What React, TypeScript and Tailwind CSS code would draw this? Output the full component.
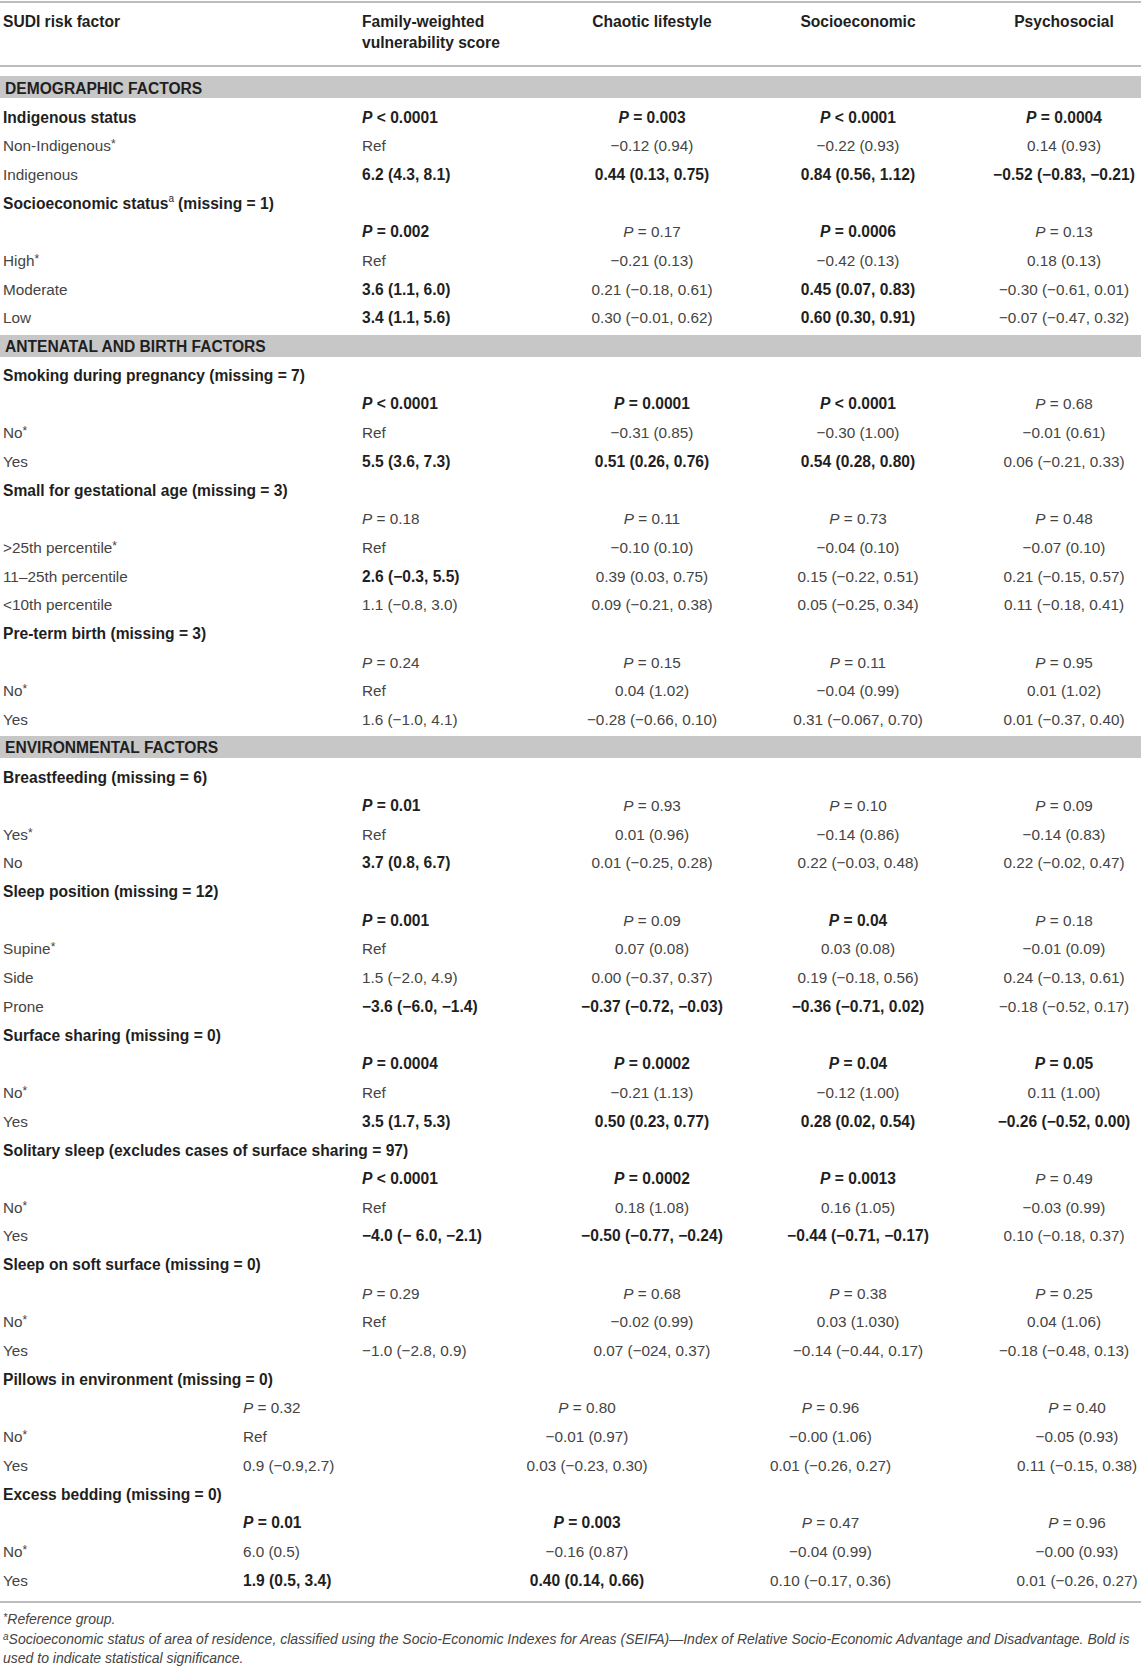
import React from "react";

type Row =
  | { kind: "section"; label: string }
  | { kind: "group"; label: string; sup?: string; cells?: string[]; alt?: boolean }
  | { kind: "data"; label: string; cells: string[]; alt?: boolean };

// "!" at the start of a cell = bold (statistically significant)
const rows: Row[] = [
  { kind: "section", label: "DEMOGRAPHIC FACTORS" },
  { kind: "group", label: "Indigenous status", cells: ["!P < 0.0001", "!P = 0.003", "!P < 0.0001", "!P = 0.0004"] },
  { kind: "data", label: "Non-Indigenous*", cells: ["Ref", "−0.12 (0.94)", "−0.22 (0.93)", "0.14 (0.93)"] },
  { kind: "data", label: "Indigenous", cells: ["!6.2 (4.3, 8.1)", "!0.44 (0.13, 0.75)", "!0.84 (0.56, 1.12)", "!−0.52 (−0.83, −0.21)"] },
  { kind: "group", label: "Socioeconomic status", sup: "a" },
  { kind: "data", label: "", cells: ["!P = 0.002", "P = 0.17", "!P = 0.0006", "P = 0.13"] },
  { kind: "data", label: "High*", cells: ["Ref", "−0.21 (0.13)", "−0.42 (0.13)", "0.18 (0.13)"] },
  { kind: "data", label: "Moderate", cells: ["!3.6 (1.1, 6.0)", "0.21 (−0.18, 0.61)", "!0.45 (0.07, 0.83)", "−0.30 (−0.61, 0.01)"] },
  { kind: "data", label: "Low", cells: ["!3.4 (1.1, 5.6)", "0.30 (−0.01, 0.62)", "!0.60 (0.30, 0.91)", "−0.07 (−0.47, 0.32)"] },
  { kind: "section", label: "ANTENATAL AND BIRTH FACTORS" },
  { kind: "group", label: "Smoking during pregnancy (missing = 7)" },
  { kind: "data", label: "", cells: ["!P < 0.0001", "!P = 0.0001", "!P < 0.0001", "P = 0.68"] },
  { kind: "data", label: "No*", cells: ["Ref", "−0.31 (0.85)", "−0.30 (1.00)", "−0.01 (0.61)"] },
  { kind: "data", label: "Yes", cells: ["!5.5 (3.6, 7.3)", "!0.51 (0.26, 0.76)", "!0.54 (0.28, 0.80)", "0.06 (−0.21, 0.33)"] },
  { kind: "group", label: "Small for gestational age (missing = 3)" },
  { kind: "data", label: "", cells: ["P = 0.18", "P = 0.11", "P = 0.73", "P = 0.48"] },
  { kind: "data", label: ">25th percentile*", cells: ["Ref", "−0.10 (0.10)", "−0.04 (0.10)", "−0.07 (0.10)"] },
  { kind: "data", label: "11–25th percentile", cells: ["!2.6 (−0.3, 5.5)", "0.39 (0.03, 0.75)", "0.15 (−0.22, 0.51)", "0.21 (−0.15, 0.57)"] },
  { kind: "data", label: "<10th percentile", cells: ["1.1 (−0.8, 3.0)", "0.09 (−0.21, 0.38)", "0.05 (−0.25, 0.34)", "0.11 (−0.18, 0.41)"] },
  { kind: "group", label: "Pre-term birth (missing = 3)" },
  { kind: "data", label: "", cells: ["P = 0.24", "P = 0.15", "P = 0.11", "P = 0.95"] },
  { kind: "data", label: "No*", cells: ["Ref", "0.04 (1.02)", "−0.04 (0.99)", "0.01 (1.02)"] },
  { kind: "data", label: "Yes", cells: ["1.6 (−1.0, 4.1)", "−0.28 (−0.66, 0.10)", "0.31 (−0.067, 0.70)", "0.01 (−0.37, 0.40)"] },
  { kind: "section", label: "ENVIRONMENTAL FACTORS" },
  { kind: "group", label: "Breastfeeding (missing = 6)" },
  { kind: "data", label: "", cells: ["!P = 0.01", "P = 0.93", "P = 0.10", "P = 0.09"] },
  { kind: "data", label: "Yes*", cells: ["Ref", "0.01 (0.96)", "−0.14 (0.86)", "−0.14 (0.83)"] },
  { kind: "data", label: "No", cells: ["!3.7 (0.8, 6.7)", "0.01 (−0.25, 0.28)", "0.22 (−0.03, 0.48)", "0.22 (−0.02, 0.47)"] },
  { kind: "group", label: "Sleep position (missing = 12)" },
  { kind: "data", label: "", cells: ["!P = 0.001", "P = 0.09", "!P = 0.04", "P = 0.18"] },
  { kind: "data", label: "Supine*", cells: ["Ref", "0.07 (0.08)", "0.03 (0.08)", "−0.01 (0.09)"] },
  { kind: "data", label: "Side", cells: ["1.5 (−2.0, 4.9)", "0.00 (−0.37, 0.37)", "0.19 (−0.18, 0.56)", "0.24 (−0.13, 0.61)"] },
  { kind: "data", label: "Prone", cells: ["!−3.6 (−6.0, −1.4)", "!−0.37 (−0.72, −0.03)", "!−0.36 (−0.71, 0.02)", "−0.18 (−0.52, 0.17)"] },
  { kind: "group", label: "Surface sharing (missing = 0)" },
  { kind: "data", label: "", cells: ["!P = 0.0004", "!P = 0.0002", "!P = 0.04", "!P = 0.05"] },
  { kind: "data", label: "No*", cells: ["Ref", "−0.21 (1.13)", "−0.12 (1.00)", "0.11 (1.00)"] },
  { kind: "data", label: "Yes", cells: ["!3.5 (1.7, 5.3)", "!0.50 (0.23, 0.77)", "!0.28 (0.02, 0.54)", "!−0.26 (−0.52, 0.00)"] },
  { kind: "group", label: "Solitary sleep (excludes cases of surface sharing = 97)" },
  { kind: "data", label: "", cells: ["!P < 0.0001", "!P = 0.0002", "!P = 0.0013", "P = 0.49"] },
  { kind: "data", label: "No*", cells: ["Ref", "0.18 (1.08)", "0.16 (1.05)", "−0.03 (0.99)"] },
  { kind: "data", label: "Yes", cells: ["!−4.0 (− 6.0, −2.1)", "!−0.50 (−0.77, −0.24)", "!−0.44 (−0.71, −0.17)", "0.10 (−0.18, 0.37)"] },
  { kind: "group", label: "Sleep on soft surface (missing = 0)" },
  { kind: "data", label: "", cells: ["P = 0.29", "P = 0.68", "P = 0.38", "P = 0.25"] },
  { kind: "data", label: "No*", cells: ["Ref", "−0.02 (0.99)", "0.03 (1.030)", "0.04 (1.06)"] },
  { kind: "data", label: "Yes", cells: ["−1.0 (−2.8, 0.9)", "0.07 (−024, 0.37)", "−0.14 (−0.44, 0.17)", "−0.18 (−0.48, 0.13)"] },
  { kind: "group", label: "Pillows in environment (missing = 0)" },
  { kind: "data", alt: true, label: "", cells: ["P = 0.32", "P = 0.80", "P = 0.96", "P = 0.40"] },
  { kind: "data", alt: true, label: "No*", cells: ["Ref", "−0.01 (0.97)", "−0.00 (1.06)", "−0.05 (0.93)"] },
  { kind: "data", alt: true, label: "Yes", cells: ["0.9 (−0.9,2.7)", "0.03 (−0.23, 0.30)", "0.01 (−0.26, 0.27)", "0.11 (−0.15, 0.38)"] },
  { kind: "group", label: "Excess bedding (missing = 0)" },
  { kind: "data", alt: true, label: "", cells: ["!P = 0.01", "!P = 0.003", "P = 0.47", "P = 0.96"] },
  { kind: "data", alt: true, label: "No*", cells: ["6.0 (0.5)", "−0.16 (0.87)", "−0.04 (0.99)", "−0.00 (0.93)"] },
  { kind: "data", alt: true, label: "Yes", cells: ["!1.9 (0.5, 3.4)", "!0.40 (0.14, 0.66)", "0.10 (−0.17, 0.36)", "0.01 (−0.26, 0.27)"] },
];

const mainGrid = "grid grid-cols-[355px_220px_154px_258px_154px]";
const altGrid = "grid grid-cols-[240px_250px_194px_329px_128px]";

function Value({ text }: { text: string }) {
  const bold = text.startsWith("!");
  const t = bold ? text.slice(1) : text;
  const cls = bold ? "font-bold text-[15.6px] text-[#1f1f1f]" : "text-[15.3px] text-[#444]";
  if (t.startsWith("P ")) {
    return (
      <span className={cls}>
        <i>P</i>
        {t.slice(1)}
      </span>
    );
  }
  return <span className={cls}>{t}</span>;
}

function Label({ text }: { text: string }) {
  if (text.endsWith("*")) {
    return (
      <span className="text-[15.3px] text-[#444]">
        {text.slice(0, -1)}
        <sup className="text-[12px] -top-[0.25em]">*</sup>
      </span>
    );
  }
  return <span className="text-[15.3px] text-[#444]">{text}</span>;
}

function TableRow({ row }: { row: Row }) {
  if (row.kind === "section") {
    return (
      <div className="h-[28.7px] flex items-center">
        <div className="h-[22px] w-full bg-[#c7c7c7] flex items-center pt-[2px] pl-[5px] font-bold text-[15.6px] text-[#1f1f1f]">
          {row.label}
        </div>
      </div>
    );
  }
  if (row.kind === "group") {
    if (!row.cells) {
      return (
        <div className="h-[28.7px] flex items-center pt-[3px] pl-[3px] font-bold text-[15.6px] text-[#1f1f1f] whitespace-nowrap">
          {row.label}
          {row.sup && (
            <>
              <sup className="font-normal text-[10px] -top-[0.45em]">{row.sup}</sup>
              <span className="ml-[4px]">(missing = 1)</span>
            </>
          )}
        </div>
      );
    }
    return (
      <div className={`${mainGrid} h-[28.7px] items-center pt-[3px]`}>
        <div className="pl-[3px] font-bold text-[15.6px] text-[#1f1f1f] whitespace-nowrap">{row.label}</div>
        <div className="pl-[7px]">
          <Value text={row.cells[0]} />
        </div>
        {row.cells.slice(1).map((c, i) => (
          <div key={i} className="text-center whitespace-nowrap">
            <Value text={c} />
          </div>
        ))}
      </div>
    );
  }
  const alt = row.alt;
  return (
    <div className={`${alt ? altGrid : mainGrid} h-[28.7px] items-center pt-[3px]`}>
      <div className="pl-[3px] whitespace-nowrap">
        <Label text={row.label} />
      </div>
      <div className={alt ? "pl-[3px] whitespace-nowrap" : "pl-[7px] whitespace-nowrap"}>
        <Value text={row.cells[0]} />
      </div>
      <div className="text-center whitespace-nowrap">
        <Value text={row.cells[1]} />
      </div>
      <div className={alt ? "text-center whitespace-nowrap pr-[36px]" : "text-center whitespace-nowrap"}>
        <Value text={row.cells[2]} />
      </div>
      <div className="text-center whitespace-nowrap">
        <Value text={row.cells[3]} />
      </div>
    </div>
  );
}

export default function App() {
  return (
    <div className="w-[1141px] bg-white font-['Liberation_Sans',Arial,sans-serif] leading-normal">
      <div className="mt-[1px] border-t-2 border-[#bdbdbd]">
        <div className={`${mainGrid} pt-[8px] pb-[12px] border-b-2 border-[#bdbdbd] font-bold text-[15.6px] leading-[21px] text-[#1f1f1f]`}>
          <div className="pl-[3px]">SUDI risk factor</div>
          <div className="pl-[7px]">
            Family-weighted
            <br />
            vulnerability score
          </div>
          <div className="text-center">Chaotic lifestyle</div>
          <div className="text-center">Socioeconomic</div>
          <div className="text-center">Psychosocial</div>
        </div>
        <div className="pt-[6px]">
          {rows.map((r, i) => (
            <TableRow key={i} row={r} />
          ))}
        </div>
        <div className="mt-[8px] border-t-2 border-[#bdbdbd] pt-[7px] pl-[3px] italic text-[14px] leading-[19.5px] text-[#444]">
          <p>
            <sup className="text-[11px] -top-[0.3em]">*</sup>Reference group.
          </p>
          <p className="whitespace-nowrap">
            <sup className="text-[10px] -top-[0.35em]">a</sup>Socioeconomic status of area of residence, classified using the Socio-Economic Indexes for Areas (SEIFA)—Index of Relative Socio-Economic Advantage and Disadvantage. Bold is
          </p>
          <p>used to indicate statistical significance.</p>
        </div>
      </div>
    </div>
  );
}
